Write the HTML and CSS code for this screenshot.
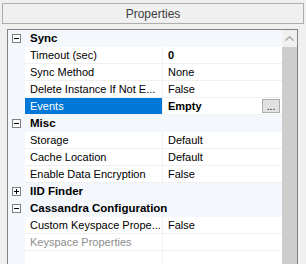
FILE: index.html
```html
<!DOCTYPE html>
<html>
<head>
<meta charset="utf-8">
<link rel="stylesheet" href="styles.css">
</head>
<body>
<div class="panel">
  <div class="header">Properties</div>
  <div class="grid">
    <div class="rows">
      <div class="row cat">
        <div class="m"><svg class="box" width="9" height="9" viewBox="0 0 9 9"><rect x="0.5" y="0.5" width="8" height="8" fill="#fff" stroke="#7f7f7f"/><path d="M2 4.5h5" stroke="#000"/></svg></div>
        <div class="ct">Sync</div>
      </div>
      <div class="row"><div class="m"></div><div class="n">Timeout (sec)</div><div class="v b">0</div></div>
      <div class="row"><div class="m"></div><div class="n">Sync Method</div><div class="v">None</div></div>
      <div class="row"><div class="m"></div><div class="n">Delete Instance If Not E...</div><div class="v">False</div></div>
      <div class="row"><div class="m"></div><div class="n sel">Events</div><div class="v b"><span class="vt">Empty</span><span class="btn">...</span></div></div>
      <div class="row cat">
        <div class="m"><svg class="box" width="9" height="9" viewBox="0 0 9 9"><rect x="0.5" y="0.5" width="8" height="8" fill="#fff" stroke="#7f7f7f"/><path d="M2 4.5h5" stroke="#000"/></svg></div>
        <div class="ct">Misc</div>
      </div>
      <div class="row"><div class="m"></div><div class="n">Storage</div><div class="v">Default</div></div>
      <div class="row"><div class="m"></div><div class="n">Cache Location</div><div class="v">Default</div></div>
      <div class="row"><div class="m"></div><div class="n">Enable Data Encryption</div><div class="v">False</div></div>
      <div class="row cat">
        <div class="m"><svg class="box" width="9" height="9" viewBox="0 0 9 9"><rect x="0.5" y="0.5" width="8" height="8" fill="#fff" stroke="#7f7f7f"/><path d="M2 4.5h5M4.5 2v5" stroke="#000"/></svg></div>
        <div class="ct">IID Finder</div>
      </div>
      <div class="row cat">
        <div class="m"><svg class="box" width="9" height="9" viewBox="0 0 9 9"><rect x="0.5" y="0.5" width="8" height="8" fill="#fff" stroke="#7f7f7f"/><path d="M2 4.5h5" stroke="#000"/></svg></div>
        <div class="ct">Cassandra Configuration</div>
      </div>
      <div class="row"><div class="m"></div><div class="n">Custom Keyspace Prope...</div><div class="v">False</div></div>
      <div class="row"><div class="m"></div><div class="n dis">Keyspace Properties</div><div class="v"></div></div>
      <div class="row fill"><div class="m"></div><div class="n"></div><div class="v"></div></div>
    </div>
    <div class="scrollbar">
      <div class="arrow"><svg width="9" height="5" viewBox="0 0 9 5"><path d="M0.5 4.5L4.5 0.8L8.5 4.5" fill="none" stroke="#a3a3a3" stroke-width="1.4"/></svg></div>
      <div class="thumb"></div>
    </div>
  </div>
</div>
</body>
</html>
```
FILE: styles.css
```css
html, body {
  margin: 0;
  padding: 0;
}
body {
  width: 306px;
  height: 264px;
  overflow: hidden;
  background: #f0f0f0;
  font-family: "Liberation Sans", Arial, sans-serif;
  font-size: 11px;
  color: #000;
}
.panel {
  display: flex;
  flex-direction: column;
  padding: 3px 2px 0 2px;
}
.header {
  height: 19px;
  border: 1px solid #adadad;
  display: flex;
  align-items: center;
  justify-content: center;
  color: #3c3c3c;
  font-size: 12px;
}
.grid {
  margin: 5px 6px 0 5px;
  height: 240px;
  border: 1px solid #828282;
  display: flex;
  background: #fff;
}
.rows {
  flex: 1;
  display: flex;
  flex-direction: column;
}
.row {
  display: flex;
  height: 17px;
  flex: none;
}
.row.fill {
  flex: 1;
}
.m {
  width: 17px;
  flex: none;
  background: #f4f7fc;
  display: flex;
  align-items: center;
  justify-content: center;
}
.cat {
  background: #f4f7fc;
}
.ct {
  padding-left: 5px;
  font-weight: bold;
  font-size: 11.5px;
  line-height: 17px;
  white-space: nowrap;
}
.n {
  width: 138px;
  flex: none;
  box-sizing: border-box;
  padding-left: 5px;
  border-right: 1px solid #f0f0f0;
  border-bottom: 1px solid #f0f0f0;
  line-height: 16px;
  white-space: nowrap;
  overflow: hidden;
}
.v {
  flex: 1;
  padding-left: 5px;
  border-bottom: 1px solid #f0f0f0;
  line-height: 16px;
  display: flex;
  align-items: flex-start;
  white-space: nowrap;
}
.fill .n, .fill .v {
  border-bottom: none;
}
.b {
  font-weight: bold;
}
.sel {
  background: #0078d7;
  color: #fff;
}
.dis {
  color: #8d8d8d;
}
.vt {
  flex: 1;
}
.btn {
  width: 16px;
  height: 12px;
  margin: 1px 2px 0 0;
  border: 1px solid #adadad;
  background: #e1e1e1;
  font-weight: normal;
  font-size: 10px;
  line-height: 14px;
  text-align: center;
  color: #000;
}
.scrollbar {
  width: 15px;
  flex: none;
  display: flex;
  flex-direction: column;
  background: #f0f0f0;
}
.arrow {
  height: 17px;
  display: flex;
  align-items: center;
  justify-content: center;
}
.thumb {
  flex: 1;
  background: #cdcdcd;
}
```
